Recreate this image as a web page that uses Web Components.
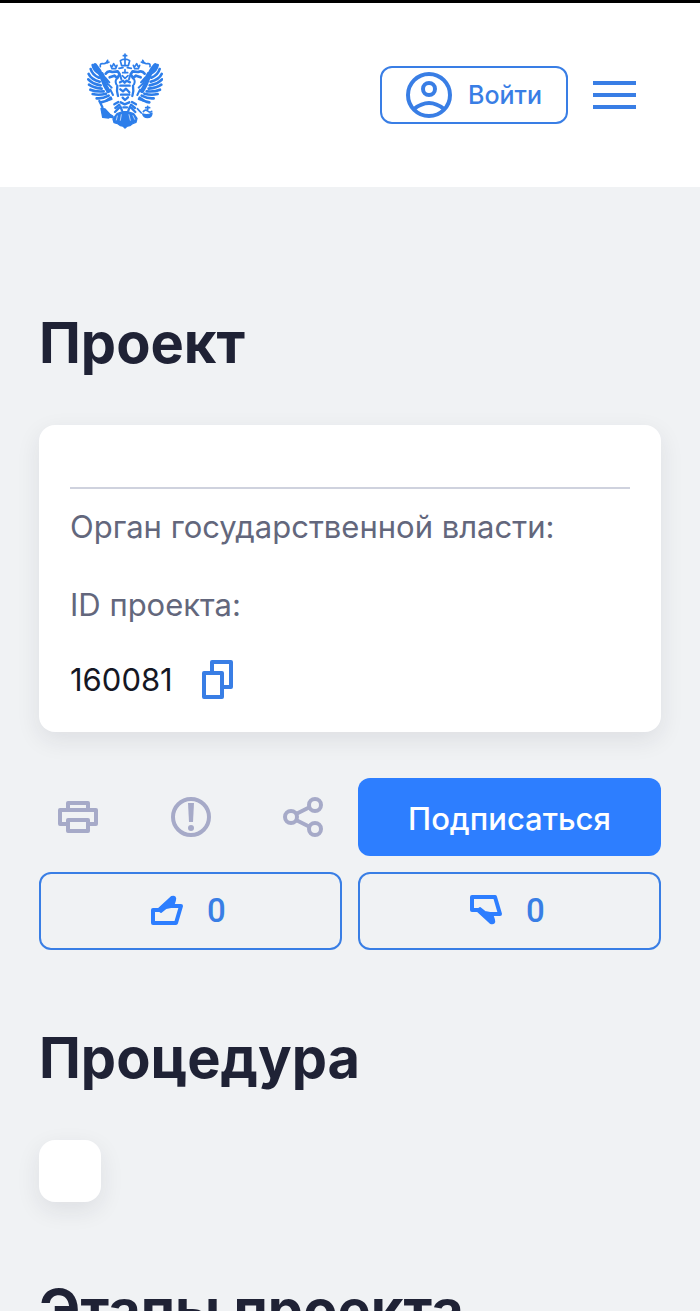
<!DOCTYPE html>
<html lang="ru">
<head>
<meta charset="utf-8">
<meta name="viewport" content="width=device-width, initial-scale=1">
<title>Проект</title>
<style>
  html { background: #f0f2f4; }
  body {
    margin: 0;
    font-family: Inter, "Noto Sans", sans-serif;
    color: #1f2235;
    --blue: #397ee5;
    --fill: #2d7eff;
    --muted: #a6aac8;
    --shadow: 0 8px 24px rgba(31, 33, 51, .09);
  }
</style>
</head>
<body>
<project-page></project-page>
<script>
const define = (name, html) => customElements.define(name, class extends HTMLElement {
  constructor() {
    super();
    this.attachShadow({ mode: 'open' }).innerHTML = html;
  }
});

define('state-emblem', `
<style>
  :host { display: block; }
  a, svg { display: block; }
</style>
<a href="#" aria-label="Главная">
<svg width="76" height="84" viewBox="36 24 228 252" fill="none" stroke="#2d7eea" stroke-linecap="round" stroke-linejoin="round">
  <g id="half">
    <g stroke-width="8">
      <path d="M53 60Q56 76 72 85"/>
      <path d="M47 72Q52 90 72 98"/>
      <path d="M41 87Q48 103 74 110"/>
      <path d="M40 103Q51 116 77 121"/>
      <path d="M42 119Q56 129 80 131"/>
      <path d="M46 134Q62 141 86 139"/>
      <path d="M53 147Q72 152 93 146"/>
      <path d="M65 160Q82 162 101 152"/>
      <path d="M78 172Q93 170 107 158"/>
    </g>
    <path stroke-width="13" d="M60 61Q74 76 81 98T100 138"/>
    <path stroke-width="6" d="M82 84Q92 103 98 118M90 97L103 112M100 118L110 128M106 134L114 150M93 168L110 162"/>
    <path stroke-width="8" d="M92 86Q99 76 112 81L128 79L134 88L127 99L118 92L104 97"/>
    <path stroke-width="6" d="M126 100Q119 107 124 118M136 92L139 103"/>
    <path stroke-width="5" d="M107 61L111 71H122L126 61M112 64L116 56L121 64M76 65Q74 54 84 56T98 46M96 54L102 51"/>
    <path stroke-width="7" d="M127 122Q124 138 129 153M118 178L130 171M121 189L133 179M120 201L132 189M136 184L141 197"/>
  </g>
  <use href="#half" transform="matrix(-1 0 0 1 301 0)"/>
  <path stroke-width="5" d="M150 27V40M145 32H155M136 47Q150 38 164 47L160 62H140Z M150 45V60M132 70L144 68M157 68L169 70M150 74V84M142 92L150 100L159 92M143 83H158"/>
  <path stroke-width="7" d="M135 112L144 107L149 113L155 107L165 112M136 122H164M136 133L144 139L153 131L163 142M138 149H163M143 158L150 165L159 157M137 172L149 178L163 172M145 187H156"/>
  <path stroke-width="7" d="M73 168L82 186L83 203L90 214L113 216"/>
  <path fill="#2d7eea" stroke-width="4" d="M78 190L90 192L104 207L113 213L101 219L83 217Z"/>
  <path fill="#2d7eea" stroke-width="4" d="M126 206L143 200H158L176 206L186 220L183 232Q171 235 165 242Q156 242 150 249Q145 242 136 242Q130 235 117 233L114 222Z"/>
  <path stroke="#fff" stroke-width="2" d="M127 213L124 225M139 209L136 226M162 209L166 226M174 212L179 223"/>
  <path fill="#2d7eea" stroke-width="4" d="M203 207Q217 212 231 204Q231 218 217 218Q206 217 203 207Z"/>
  <path stroke-width="5" d="M205 200Q212 192 218 198T230 199M218 184V195M212 188H224M187 191L199 204"/>
</svg>
</a>`);

define('login-button', `
<style>
  :host { display: block; }
  button {
    display: flex; align-items: center; gap: 16px; box-sizing: border-box;
    height: 58px; padding: 0 24px; border: 2px solid var(--blue); border-radius: 12px;
    background: #fff; color: var(--blue); font: 500 25px/32px Inter, sans-serif;
  }
</style>
<button type="button">
  <svg width="46" height="46" viewBox="0 0 46 46" fill="none" stroke="currentColor" stroke-width="4">
    <circle cx="23" cy="23" r="21"/><circle cx="23" cy="17" r="6"/>
    <path d="M8 37Q23 25 38 37"/>
  </svg>
  <slot></slot>
</button>`);

define('menu-button', `
<style>
  :host { display: block; }
  button { display: block; padding: 0; border: 0; background: none; color: var(--blue); }
  svg { display: block; }
</style>
<button type="button" aria-label="Меню">
  <svg width="43" height="28" viewBox="0 0 43 28" stroke="currentColor" stroke-width="4"><path d="M0 2H43M0 14H43M0 26H43"/></svg>
</button>`);

define('site-header', `
<style>
  :host { display: block; border-top: 3px solid #000; background: #fff; }
  header { display: flex; align-items: center; gap: 25px; min-height: 184px; padding: 0 64px 0 87px; }
  state-emblem { margin-right: auto; }
</style>
<header>
  <state-emblem></state-emblem>
  <login-button>Войти</login-button>
  <menu-button></menu-button>
</header>`);

define('section-title', `
<style>
  :host { display: block; margin-bottom: 46px; }
  h2 { margin: 0; font-size: 56px; line-height: 72px; font-weight: 700; }
</style>
<h2><slot></slot></h2>`);

define('info-card', `
<style>
  :host { display: block; padding: 62px 31px 32px; border-radius: 16px; background: #fff; box-shadow: var(--shadow); }
  hr { margin: 0 0 18px; border: 0; border-top: 2px solid #cfd2de; }
  dl { margin: 0; font-size: 31px; line-height: 40px; }
  dt { color: #63677c; margin-bottom: 38px; }
  dt:last-of-type { margin-bottom: 35px; }
  dd { display: flex; align-items: center; gap: 28px; margin: 0; color: #151724; }
  button { padding: 0; border: 0; background: none; color: var(--blue); }
  svg { display: block; }
</style>
<hr>
<dl>
  <dt><slot name="owner"></slot></dt>
  <dt><slot name="label"></slot></dt>
  <dd><slot name="value"></slot>
    <button type="button" aria-label="Скопировать">
      <svg width="32" height="40" viewBox="0 0 32 40" fill="none" stroke="currentColor" stroke-width="4" stroke-linejoin="round">
        <path d="M3 13H21V37H3ZM11 13V2H30V27H21"/>
      </svg>
    </button>
  </dd>
</dl>`);

define('project-tools', `
<style>
  :host { display: flex; justify-content: space-between; }
  button { display: grid; place-items: center; width: 78px; height: 78px; padding: 0; border: 0; background: none; color: var(--muted); }
  svg { fill: none; stroke: currentColor; stroke-width: 4; }
</style>
<button type="button" aria-label="Печать">
  <svg width="40" height="40" viewBox="0 0 40 40" stroke-linejoin="round"><path d="M10 13V6H30V13M10 27H2V13H38V27H30M10 23H30V34H10Z"/></svg>
</button>
<button type="button" aria-label="Сообщить">
  <svg width="40" height="40" viewBox="0 0 40 40"><circle cx="20" cy="20" r="18"/><path d="M17 6H23L22 25H18Z" fill="currentColor" stroke="none"/><circle cx="20" cy="31" r="3" fill="currentColor" stroke="none"/></svg>
</button>
<button type="button" aria-label="Поделиться">
  <svg width="40" height="40" viewBox="0 0 40 40"><circle cx="8" cy="20" r="6"/><circle cx="32" cy="8" r="6"/><circle cx="32" cy="32" r="6"/><path d="M13 17L27 10M13 23L27 30"/></svg>
</button>`);

define('subscribe-button', `
<style>
  :host { display: block; }
  button { width: 100%; height: 78px; padding: 4px 0 0; border: 0; border-radius: 12px; background: var(--fill); color: #fff; font: 500 31px/40px Inter, sans-serif; }
</style>
<button type="button"><slot></slot></button>`);

define('vote-button', `
<style>
  :host { display: block; }
  button {
    display: flex; align-items: center; justify-content: center; gap: 24px; box-sizing: border-box;
    width: 100%; height: 78px; padding: 0 4px 2px 0; border: 2px solid var(--blue); border-radius: 12px;
    background: none; color: var(--blue); font: 500 33px/40px Roboto, sans-serif;
  }
  span { padding-top: 2px; }
  :host([down]) svg { transform: scaleY(-1); }
</style>
<button type="button">
  <svg width="32" height="30" viewBox="0 0 32 30" fill="none" stroke="#2d7eff" stroke-width="4" stroke-linejoin="round">
    <path d="M2 15H8L21 3Q24 2 23 5L21 11H30L25 28H2Z"/>
    <path d="M7 15L21 3Q24 2 23 5L20 12L15 13L10 17Z" fill="#2d7eff" stroke-width="2"/>
  </svg>
  <span><slot></slot></span>
</button>`);

define('project-page', `
<style>
  :host { display: block; }
  main { padding: 120px 39px 72px; }
  .actions { display: grid; grid-template-columns: 1fr 1fr; gap: 16px; margin: 46px 0 72px; }
  .stage { width: 62px; height: 62px; margin-bottom: 72px; border-radius: 16px; background: #fff; box-shadow: var(--shadow); }
</style>
<site-header></site-header>
<main>
  <section-title>Проект</section-title>
  <info-card>
    <span slot="owner">Орган государственной власти:</span>
    <span slot="label">ID проекта:</span>
    <span slot="value">160081</span>
  </info-card>
  <div class="actions">
    <project-tools></project-tools>
    <subscribe-button>Подписаться</subscribe-button>
    <vote-button aria-label="Нравится">0</vote-button>
    <vote-button down aria-label="Не нравится">0</vote-button>
  </div>
  <section-title>Процедура</section-title>
  <div class="stage"></div>
  <section-title>Этапы проекта</section-title>
</main>`);
</script>
</body>
</html>
